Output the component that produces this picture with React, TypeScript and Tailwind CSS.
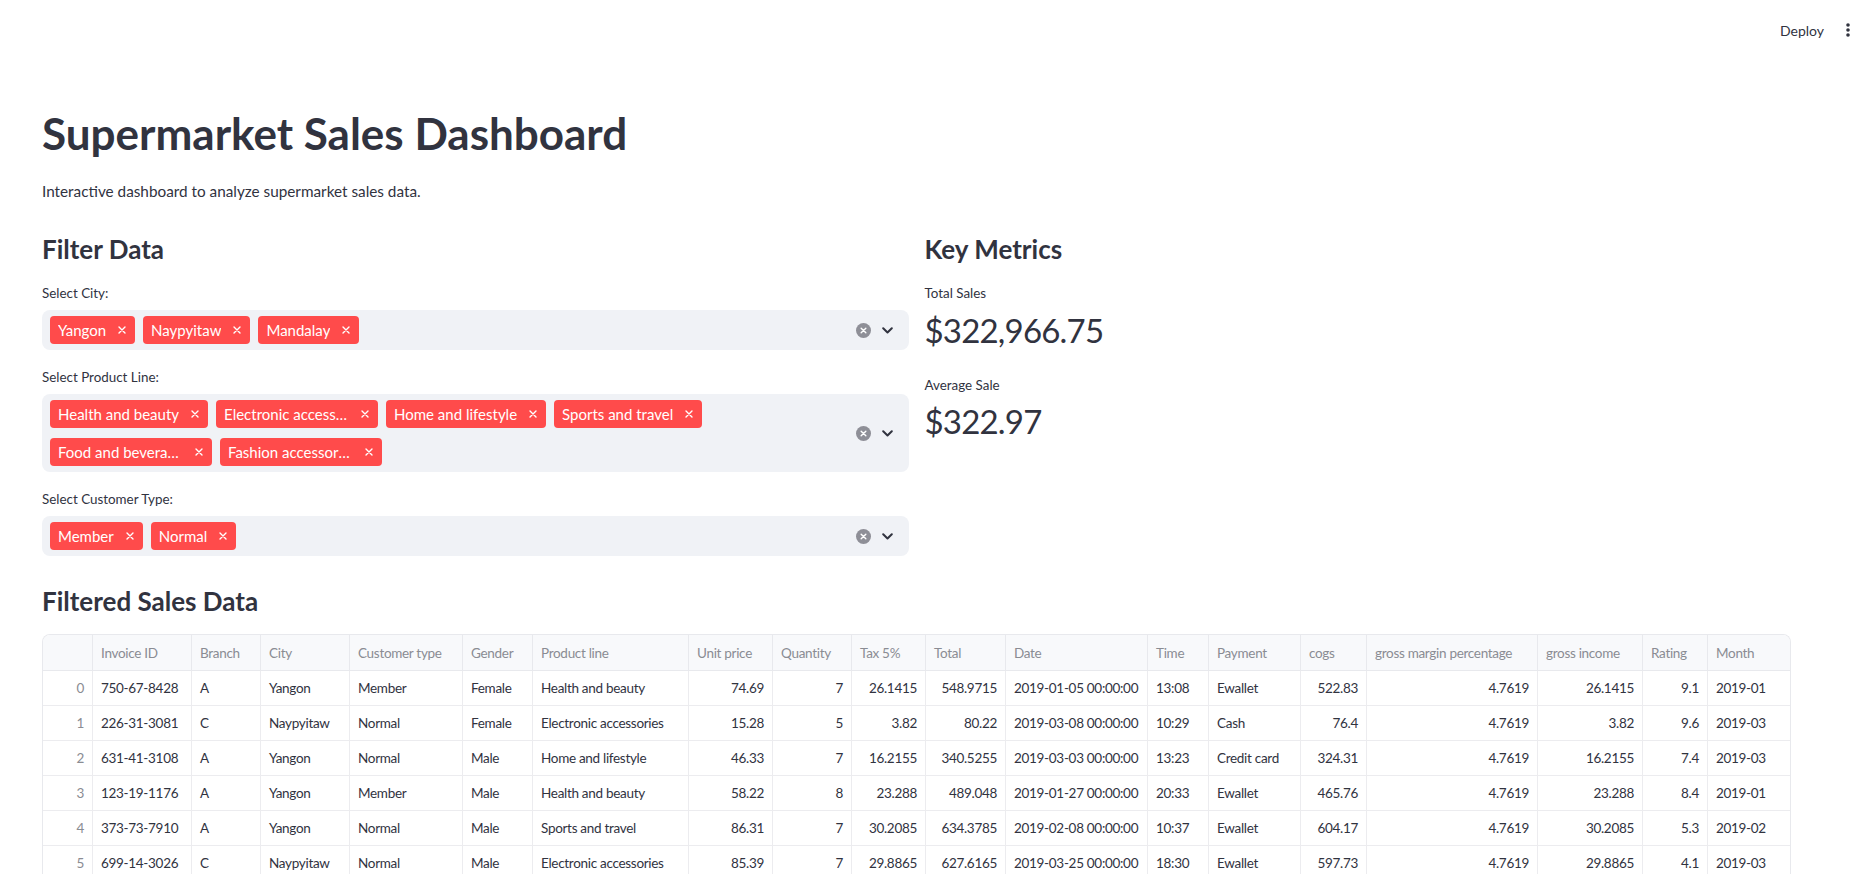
import { useState } from 'react';

const cities = ['Yangon', 'Naypyitaw', 'Mandalay'];
const products = ['Health and beauty', 'Electronic accessories', 'Home and lifestyle', 'Sports and travel', 'Food and beverages', 'Fashion accessories'];
const customers = ['Member', 'Normal'];

const columns = [
  { label: '', w: 'w-[50px]', right: true },
  { label: 'Invoice ID', w: 'w-[99px]', right: false },
  { label: 'Branch', w: 'w-[69px]', right: false },
  { label: 'City', w: 'w-[89px]', right: false },
  { label: 'Customer type', w: 'w-[113px]', right: false },
  { label: 'Gender', w: 'w-[70px]', right: false },
  { label: 'Product line', w: 'w-[156px]', right: false },
  { label: 'Unit price', w: 'w-[84px]', right: true },
  { label: 'Quantity', w: 'w-[79px]', right: true },
  { label: 'Tax 5%', w: 'w-[74px]', right: true },
  { label: 'Total', w: 'w-[80px]', right: true },
  { label: 'Date', w: 'w-[142px]', right: false },
  { label: 'Time', w: 'w-[61px]', right: false },
  { label: 'Payment', w: 'w-[92px]', right: false },
  { label: 'cogs', w: 'w-[66px]', right: true },
  { label: 'gross margin percentage', w: 'w-[171px]', right: true },
  { label: 'gross income', w: 'w-[105px]', right: true },
  { label: 'Rating', w: 'w-[65px]', right: true },
  { label: 'Month', w: 'w-[82px]', right: false },
];

const rows = [
  ['0', '750-67-8428', 'A', 'Yangon', 'Member', 'Female', 'Health and beauty', '74.69', '7', '26.1415', '548.9715', '2019-01-05 00:00:00', '13:08', 'Ewallet', '522.83', '4.7619', '26.1415', '9.1', '2019-01'],
  ['1', '226-31-3081', 'C', 'Naypyitaw', 'Normal', 'Female', 'Electronic accessories', '15.28', '5', '3.82', '80.22', '2019-03-08 00:00:00', '10:29', 'Cash', '76.4', '4.7619', '3.82', '9.6', '2019-03'],
  ['2', '631-41-3108', 'A', 'Yangon', 'Normal', 'Male', 'Home and lifestyle', '46.33', '7', '16.2155', '340.5255', '2019-03-03 00:00:00', '13:23', 'Credit card', '324.31', '4.7619', '16.2155', '7.4', '2019-03'],
  ['3', '123-19-1176', 'A', 'Yangon', 'Member', 'Male', 'Health and beauty', '58.22', '8', '23.288', '489.048', '2019-01-27 00:00:00', '20:33', 'Ewallet', '465.76', '4.7619', '23.288', '8.4', '2019-01'],
  ['4', '373-73-7910', 'A', 'Yangon', 'Normal', 'Male', 'Sports and travel', '86.31', '7', '30.2085', '634.3785', '2019-02-08 00:00:00', '10:37', 'Ewallet', '604.17', '4.7619', '30.2085', '5.3', '2019-02'],
  ['5', '699-14-3026', 'C', 'Naypyitaw', 'Normal', 'Male', 'Electronic accessories', '85.39', '7', '29.8865', '627.6165', '2019-03-25 00:00:00', '18:30', 'Ewallet', '597.73', '4.7619', '29.8865', '4.1', '2019-03'],
  ['6', '355-53-5943', 'A', 'Yangon', 'Normal', 'Female', 'Electronic accessories', '68.84', '6', '20.652', '433.692', '2019-02-25 00:00:00', '14:36', 'Ewallet', '413.04', '4.7619', '20.652', '5.8', '2019-02'],
];

const Tag = ({ label, onRemove }: { label: string; onRemove: () => void }) => (
  <span className="h-7 flex items-center bg-[#ff4b4b] text-white rounded-[4px] pl-2 pr-[9px] text-[15px]">
    <span className="truncate max-w-[125px]">{label}</span>
    <button onClick={onRemove} className="ml-3 flex items-center">
      <svg width="8" height="8" viewBox="0 0 8 8">
        <path d="M1 1L7 7M7 1L1 7" stroke="white" strokeWidth="1.4" strokeLinecap="round" />
      </svg>
    </button>
  </span>
);

const MultiSelect = ({ label, initial, gapClass }: { label: string; initial: string[]; gapClass: string }) => {
  const [values, setValues] = useState(initial);
  return (
    <div className={gapClass}>
      <div className="text-[13.4px] leading-5">{label}</div>
      <div className="mt-[7px] bg-[#f0f2f6] rounded-lg flex items-center pl-2 min-h-10">
        <div className="flex-1 flex flex-wrap gap-x-2 gap-y-[10px] py-[6px]">
          {values.map(v => (
            <Tag key={v} label={v} onRemove={() => setValues(values.filter(x => x !== v))} />
          ))}
        </div>
        <div className="flex items-center gap-[11px] pr-4">
          <svg width="15" height="15" viewBox="0 0 16 16">
            <circle cx="8" cy="8" r="8" fill="#8e8f97" />
            <path d="M5.5 5.5L10.5 10.5M10.5 5.5L5.5 10.5" stroke="white" strokeWidth="1.5" strokeLinecap="round" />
          </svg>
          <svg width="11" height="7" viewBox="0 0 11 7">
            <path d="M1.2 1.2L5.5 5.5L9.8 1.2" stroke="#31333f" strokeWidth="2" fill="none" strokeLinecap="round" strokeLinejoin="round" />
          </svg>
        </div>
      </div>
    </div>
  );
};

export default function App() {
  return (
    <div className="min-h-screen bg-white text-[#31333f] font-['Lato',sans-serif]">
      <header className="h-[60px] flex justify-end items-center pr-[26px] gap-[22px]">
        <button className="text-[14px]">Deploy</button>
        <svg width="4" height="14" viewBox="0 0 4 14">
          <circle cx="2" cy="2" r="1.8" fill="#31333f" />
          <circle cx="2" cy="7" r="1.8" fill="#31333f" />
          <circle cx="2" cy="12" r="1.8" fill="#31333f" />
        </svg>
      </header>

      <main className="pl-[42px] w-[1791px]">
        <h1 className="mt-[47px] text-[44px] leading-[52px] font-bold">Supermarket Sales Dashboard</h1>
        <p className="mt-5 text-[15.3px] leading-6">Interactive dashboard to analyze supermarket sales data.</p>

        <div className="mt-7 grid grid-cols-2 gap-4">
          <div>
            <h3 className="text-[26px] leading-9 font-bold">Filter Data</h3>
            <MultiSelect label="Select City:" initial={cities} gapClass="mt-4" />
            <MultiSelect label="Select Product Line:" initial={products} gapClass="mt-[17px]" />
            <MultiSelect label="Select Customer Type:" initial={customers} gapClass="mt-[17px]" />
          </div>
          <div>
            <h3 className="text-[26px] leading-9 font-bold">Key Metrics</h3>
            <div className="mt-4 text-[13.4px] leading-5">Total Sales</div>
            <div className="mt-[5px] text-[33px] leading-[44px] tracking-[-0.8px]">$322,966.75</div>
            <div className="mt-[23px] text-[13.4px] leading-5">Average Sale</div>
            <div className="mt-1 text-[33px] leading-[44px] tracking-[-0.8px]">$322.97</div>
          </div>
        </div>

        <h3 className="mt-[27px] text-[26px] leading-9 font-bold">Filtered Sales Data</h3>
        <div className="mt-[15px] h-[240px] overflow-hidden border border-[#e8e9ed] border-b-0 rounded-t-lg text-[13.5px] tracking-[-0.3px]">
          <div className="flex h-[36px] bg-[#f8f9fb] border-b border-[#e8e9ed]">
            {columns.map((c, i) => (
              <div key={i} className={`${c.w} flex-none flex items-center pt-[2px] px-2 text-[#8a8c93] truncate ${i < columns.length - 1 ? 'border-r border-[#e8e9ed]' : ''}`}>
                {c.label}
              </div>
            ))}
          </div>
          {rows.map(r => (
            <div key={r[0]} className="flex h-[35px] border-b border-[#ececef]">
              {r.map((cell, i) => (
                <div
                  key={i}
                  className={`${columns[i].w} flex-none flex items-center px-2 truncate ${columns[i].right ? 'justify-end' : ''} ${i === 0 ? 'text-[#8a8c93]' : ''} ${i < columns.length - 1 ? 'border-r border-[#ececef]' : ''}`}
                >
                  {cell}
                </div>
              ))}
            </div>
          ))}
        </div>
      </main>
    </div>
  );
}
